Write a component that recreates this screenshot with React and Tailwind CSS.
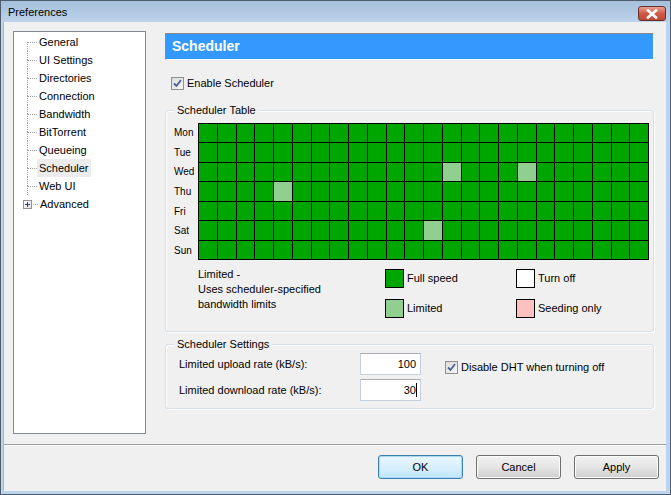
import React from "react";

const FONT = { fontFamily: '"Liberation Sans", Arial, sans-serif' };

const treeItems = [
  "General",
  "UI Settings",
  "Directories",
  "Connection",
  "Bandwidth",
  "BitTorrent",
  "Queueing",
  "Scheduler",
  "Web UI",
];

const days = ["Mon", "Tue", "Wed", "Thu", "Fri", "Sat", "Sun"];
const limited = { "2-13": 1, "2-17": 1, "3-4": 1, "5-12": 1 };

function Check() {
  return (
    <div className="w-[13px] h-[13px] border border-[#8e8f8f] bg-gradient-to-br from-[#dcdcdc] to-[#f6f6f6] flex items-center justify-center shrink-0">
      <svg width="9" height="9" viewBox="0 0 9 9">
        <path d="M1 4.5 L3.5 7 L8 1" stroke="#4a5f97" strokeWidth="1.8" fill="none" />
      </svg>
    </div>
  );
}

function Group({ title, className, children }) {
  return (
    <div className={"relative border border-[#d5dfe5] rounded-[3px] shadow-[inset_1px_1px_0_#fff,1px_1px_0_#fff] " + className}>
      <span className="absolute left-[8px] top-[-8px] px-[3px] bg-[#f0f0f0] leading-[14px] text-[11px] text-black">
        {title}
      </span>
      {children}
    </div>
  );
}

function Btn({ children, def }) {
  return (
    <div
      className={
        "w-[85px] h-[24px] rounded-[3px] border flex items-center justify-center text-[11px] text-black " +
        (def
          ? "border-[#3c7fb1] bg-gradient-to-b from-[#eaf6fd] via-[#d9f0fc] to-[#bee6fd] shadow-[inset_0_0_0_1px_#a7d9f5]"
          : "border-[#707070] bg-gradient-to-b from-[#f2f2f2] via-[#e5e5e5] to-[#cfcfcf] shadow-[inset_0_0_0_1px_#fcfcfc]")
      }
    >
      {children}
    </div>
  );
}

export default function App() {
  return (
    <div style={FONT} className="w-[671px] h-[495px] flex flex-col bg-[#bcd4ec] border border-[#4f5c6b] text-black overflow-hidden">
      {/* Title bar */}
      <div className="h-[21px] shrink-0 flex items-center justify-between bg-gradient-to-b from-[#a5bfdb] to-[#bcd3eb] pl-[7px] pr-[4px]">
        <span className="text-[11px] text-black leading-none mt-[2px]">Preferences</span>
        <div className="w-[28px] h-[15px] mt-[4px] rounded-[3px] border border-[#6b2f2a] bg-gradient-to-b from-[#e8a093] via-[#cf5b48] to-[#c14a36] flex items-center justify-center">
          <svg width="12" height="10" viewBox="0 0 12 10">
            <path d="M2 1.5 L10 8.5 M10 1.5 L2 8.5" stroke="#fff" strokeWidth="2.6" strokeLinecap="square" />
            <path d="M2 1.5 L10 8.5 M10 1.5 L2 8.5" stroke="#fff" strokeWidth="2" />
          </svg>
        </div>
      </div>

      {/* Body */}
      <div className="flex-1 ml-[2px] mr-[4px] mb-[3px] bg-[#f0f0f0] border-l border-[#a4b8cc] flex flex-col">
        <div className="flex pt-[9px] pl-[9px]">
          {/* Tree */}
          <div className="w-[133px] h-[403px] border border-[#828790] bg-white pt-[1px] text-[11px]">
            {treeItems.map((t, i) => (
              <div key={t} className="flex h-[18px] items-stretch">
                <div className="ml-[13px] w-[10px] flex flex-col">
                  <div className={"h-[9px] " + (i > 0 ? "border-l border-dotted border-[#a0a0a0]" : "")} />
                  <div className="h-[9px] border-l border-t border-dotted border-[#a0a0a0]" />
                </div>
                <div className={"flex items-center px-[2px] " + (t === "Scheduler" ? "bg-[#ececec]" : "")}>
                  {t}
                </div>
              </div>
            ))}
            <div className="flex h-[18px] items-center">
              <div className="ml-[9px] w-[9px] h-[9px] border border-[#919191] bg-gradient-to-br from-white to-[#e0e0e0] flex items-center justify-center">
                <svg width="5" height="5" viewBox="0 0 5 5">
                  <path d="M0 2.5 H5 M2.5 0 V5" stroke="#1e3f86" strokeWidth="1" />
                </svg>
              </div>
              <div className="w-[5px] h-[1px] border-t border-dotted border-[#a0a0a0] ml-[1px]" />
              <div className="px-[2px]">Advanced</div>
            </div>
          </div>

          {/* Right */}
          <div className="ml-[19px] w-[489px] flex flex-col pt-[2px]">
            <div className="h-[27px] bg-[#3399ff] border-t border-l border-[#8a8a8a] border-b border-r border-b-[#fff] border-r-[#fff] flex items-center pl-[6px]">
              <span className="text-white font-bold text-[14px]">Scheduler</span>
            </div>

            <div className="flex items-center mt-[17px] ml-[6px] h-[13px]">
              <Check />
              <span className="ml-[3px] text-[11px]">Enable Scheduler</span>
            </div>

            <Group title="Scheduler Table" className="mt-[20px] h-[222px] pt-[12px] pl-[8px]">
              <div className="flex">
                <div className="w-[24px] h-[137px] grid grid-rows-7 text-[10px]">
                  {days.map((d) => (
                    <div key={d} className="flex items-center">
                      {d}
                    </div>
                  ))}
                </div>
                <div className="w-[451px] h-[137px] bg-black p-px grid grid-cols-24 grid-rows-7 gap-px">
                  {days.map((d, r) =>
                    Array.from({ length: 24 }).map((_, c) => (
                      <div
                        key={r + "-" + c}
                        className={limited[r + "-" + c] ? "bg-[#90cf90]" : "bg-[#00a600]"}
                      />
                    ))
                  )}
                </div>
              </div>
              <div className="flex mt-[7px] ml-[24px] text-[11px]">
                <div className="w-[187px] leading-[15px]">
                  Limited -
                  <br />
                  Uses scheduler-specified
                  <br />
                  bandwidth limits
                </div>
                <div className="w-[131px] flex flex-col gap-[11px] pt-[2px]">
                  <div className="flex items-center">
                    <div className="w-[19px] h-[19px] border border-black bg-[#00a600]" />
                    <span className="ml-[3px]">Full speed</span>
                  </div>
                  <div className="flex items-center">
                    <div className="w-[19px] h-[19px] border border-black bg-[#90cf90]" />
                    <span className="ml-[3px]">Limited</span>
                  </div>
                </div>
                <div className="flex flex-col gap-[11px] pt-[2px]">
                  <div className="flex items-center">
                    <div className="w-[19px] h-[19px] border border-black bg-white" />
                    <span className="ml-[3px]">Turn off</span>
                  </div>
                  <div className="flex items-center">
                    <div className="w-[19px] h-[19px] border border-black bg-[#ffc0c0]" />
                    <span className="ml-[3px]">Seeding only</span>
                  </div>
                </div>
              </div>
            </Group>

            <Group title="Scheduler Settings" className="mt-[12px] h-[65px] pt-[8px] pl-[13px] text-[11px]">
              <div className="flex">
                <div className="flex flex-col gap-[4px]">
                  <div className="flex items-center h-[22px]">
                    <span className="w-[181px]">Limited upload rate (kB/s):</span>
                    <div className="w-[61px] h-[22px] bg-white border border-[#c5d2de] border-t-[#abadb3] flex items-center justify-end pr-[4px]">
                      100
                    </div>
                  </div>
                  <div className="flex items-center h-[22px]">
                    <span className="w-[181px]">Limited download rate (kB/s):</span>
                    <div className="w-[61px] h-[22px] bg-white border border-[#c5d2de] border-t-[#abadb3] flex items-center justify-end pr-[3px]">
                      30
                      <div className="w-px h-[14px] bg-black" />
                    </div>
                  </div>
                </div>
                <div className="flex items-center ml-[24px] h-[13px] mt-[8px]">
                  <Check />
                  <span className="ml-[3px]">Disable DHT when turning off</span>
                </div>
              </div>
            </Group>
          </div>
        </div>

        <div className="mt-[10px] h-[2px] border-t border-[#a0a0a0] border-b border-b-white" />

        <div className="flex justify-end gap-[13px] mt-[9px] pr-[7px]">
          <Btn def>OK</Btn>
          <Btn>Cancel</Btn>
          <Btn>Apply</Btn>
        </div>
      </div>
    </div>
  );
}
